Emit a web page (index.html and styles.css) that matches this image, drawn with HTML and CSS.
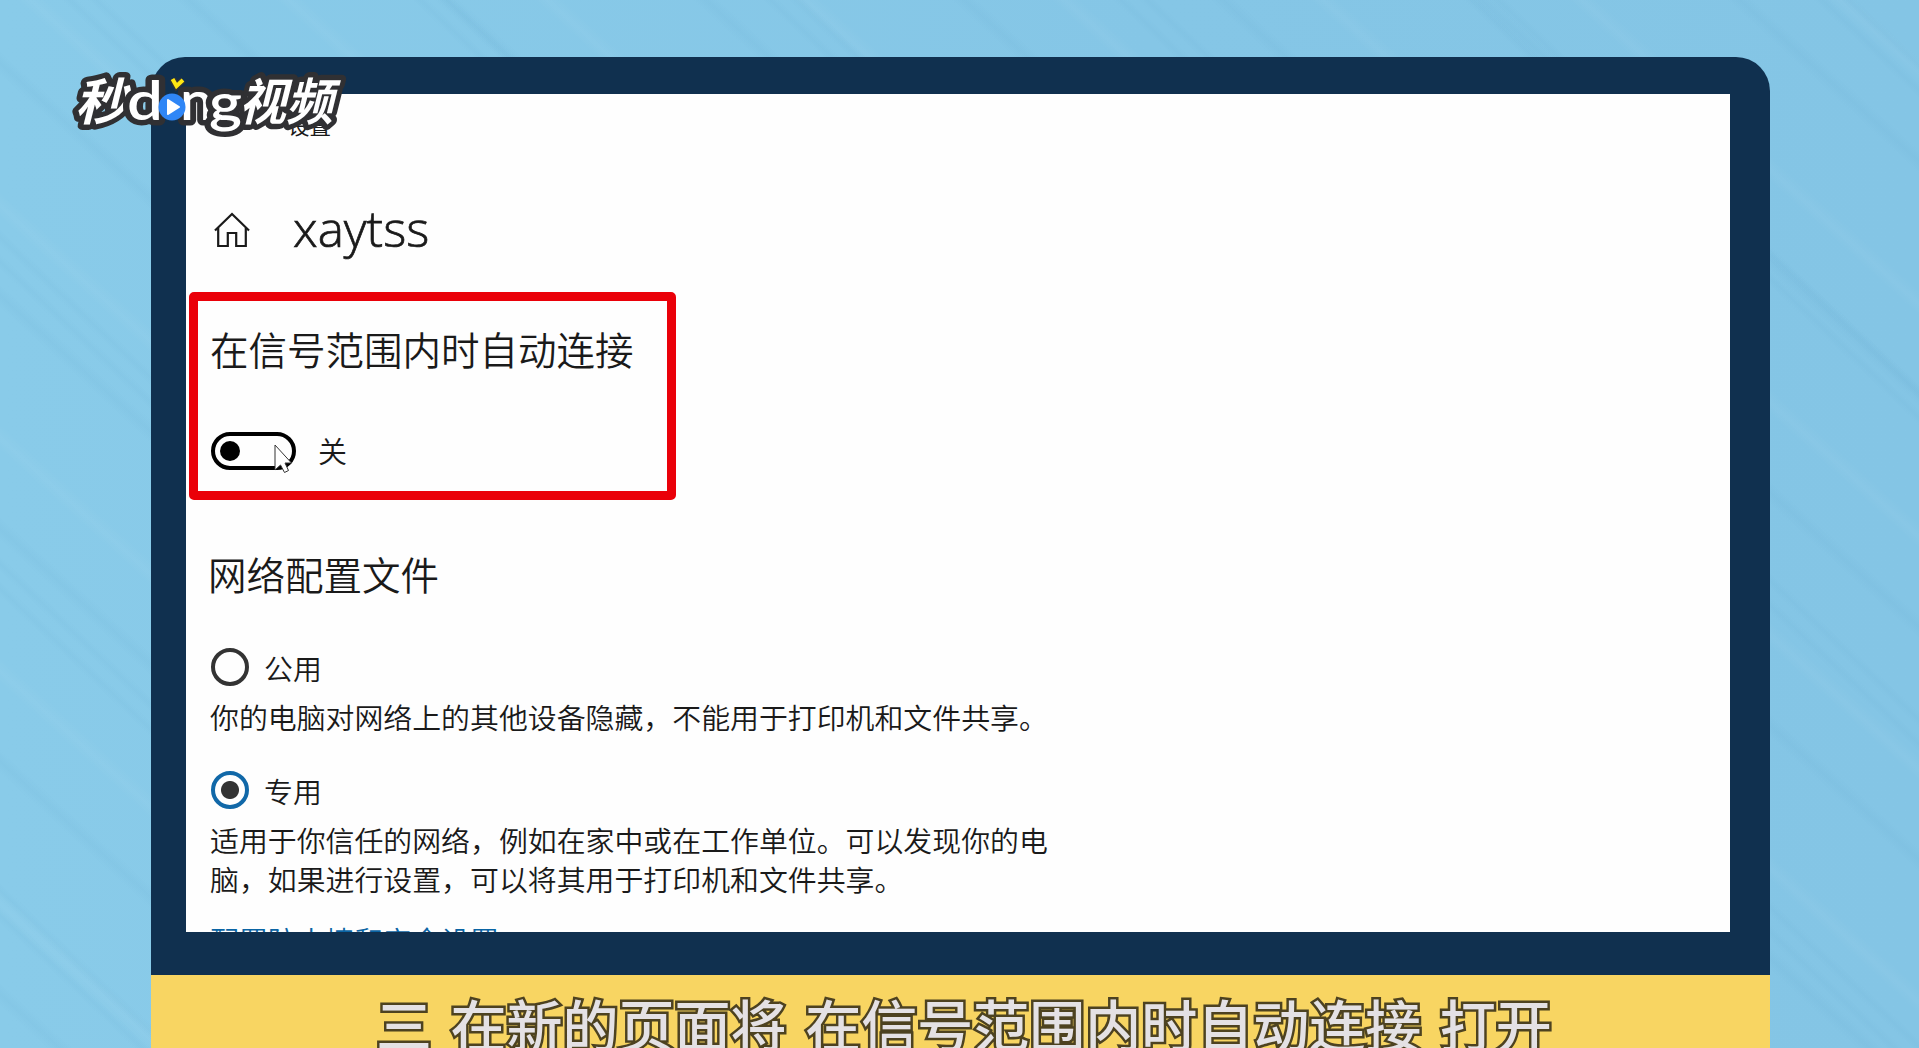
FILE: index.html
```html
<!DOCTYPE html>
<html lang="zh-CN">
<head>
  <meta charset="UTF-8">
  <meta name="viewport" content="width=device-width, initial-scale=1.0">
  <title>xaytss</title>
  <link rel="stylesheet" href="styles.css">
</head>
<body>
  <div class="monitor">
    <div class="screen">
      <div class="window-title">设置</div>

      <div class="page-header">
        <svg class="home" viewBox="0 0 36 36" fill="none" stroke="#1a1a1a" stroke-width="2.2">
          <path d="M1 18.500 L18 2 L35 18.500"/>
          <path d="M4.200 16 V34 H13.800 V21 H22.200 V34 H31.800 V16"/>
        </svg>
        <h1>xaytss</h1>
      </div>

      <div class="highlight">
        <h2>在信号范围内时自动连接</h2>
        <div class="toggle-row">
          <div class="toggle">
            <span class="knob"></span>
            <svg class="cursor" viewBox="0 0 18 30">
              <path d="M1 1 V26 L6.500 21 L10.500 28.500 L14.500 26.500 L11 19 H17.500 Z" fill="#fff" stroke="#333" stroke-width="1"/>
            </svg>
          </div>
          <span>关</span>
        </div>
      </div>

      <div class="profile">
        <h2>网络配置文件</h2>
        <div class="option">
          <span class="radio"></span>
          <span>公用</span>
        </div>
        <p>你的电脑对网络上的其他设备隐藏，不能用于打印机和文件共享。</p>
        <div class="option">
          <span class="radio checked"></span>
          <span>专用</span>
        </div>
        <p>适用于你信任的网络，例如在家中或在工作单位。可以发现你的电<br>脑，如果进行设置，可以将其用于打印机和文件共享。</p>
        <a class="link">配置防火墙和安全设置</a>
      </div>
    </div>
  </div>

  <div class="caption">三 在新的页面将 在信号范围内时自动连接 打开</div>

  <svg class="logo" viewBox="0 0 290 90">
    <g class="logo-text">
      <text class="cn" transform="translate(5 60) skewX(-14)" textLength="53" lengthAdjust="spacingAndGlyphs">秒</text>
      <text class="en" x="57" y="60" textLength="36" lengthAdjust="spacingAndGlyphs">d</text>
      <text class="en" x="110" y="60" textLength="33" lengthAdjust="spacingAndGlyphs">n</text>
      <text class="en" x="139" y="62" textLength="33" lengthAdjust="spacingAndGlyphs">g</text>
      <text class="cn" transform="translate(169 60) skewX(-14)" textLength="94" lengthAdjust="spacingAndGlyphs">视频</text>
    </g>
    <circle cx="102" cy="47" r="13.500" fill="#2f86f6"/>
    <path d="M98 40 L109 47 L98 54 Z" fill="#fff" stroke="#fff" stroke-width="2" stroke-linejoin="round"/>
    <path d="M102.500 19 L106.500 26 L113 20" fill="none" stroke="#333" stroke-width="7"/>
    <path d="M102.500 19 L106.500 26 L113 20" fill="none" stroke="#ffe712" stroke-width="4"/>
  </svg>
</body>
</html>
```
FILE: styles.css
```css
body {
  margin: 0;
  padding: 57px 149px 0 151px;
  height: 1048px;
  box-sizing: border-box;
  overflow: hidden;
  position: relative;
  font-family: "Noto Sans CJK SC", sans-serif;
  color: #1a1a1a;
  /* diagonal brush streaks over the light blue */
  background:
    repeating-linear-gradient(42deg, transparent 0 31px, rgba(80,150,190,.07) 40px, transparent 49px 98px, rgba(255,255,255,.04) 107px, transparent 118px 173px),
    repeating-linear-gradient(43deg, transparent 0 91px, rgba(80,150,190,.06) 97px, transparent 103px 109px, rgba(80,150,190,.06) 115px, transparent 121px 239px),
    linear-gradient(90deg, #89cbe9, #85c6e6 60%, #84c5e5);
}
h1, h2, p {
  margin: 0;
  font-weight: 300;
}
.monitor {
  height: 918px;
  box-sizing: border-box;
  padding: 37px 40px 43px 35px;
  background: #10304f;
  border-radius: 34px 34px 0 0;
}
.screen {
  height: 838px;
  overflow: hidden;
  background: #fefefe;
}
.window-title {
  height: 74px;
  padding: 16px 0 0 102px;
  box-sizing: border-box;
  font-size: 21.500px;
  line-height: 30px;
}
.page-header {
  display: flex;
  align-items: center;
  gap: 43px;
  height: 124px;
  padding: 0 0 0 28px;
  box-sizing: border-box;
}
.home {
  width: 36px;
  height: 36px;
}
h1 {
  font-family: "Open Sans", "Noto Sans", sans-serif;
  font-size: 49.500px;
  line-height: 60px;
  padding-bottom: 4px;
  -webkit-text-stroke: .7px #1a1a1a;
}
.highlight {
  width: 487px;
  height: 208px;
  margin-left: 3px;
  padding: 19px 0 0 12px;
  box-sizing: border-box;
  border: 9px solid #ea0009;
  border-radius: 5px;
}
h2 {
  font-size: 38.500px;
  line-height: 56px;
  font-weight: 350;
}
.toggle-row {
  display: flex;
  align-items: center;
  gap: 22px;
  margin: 54px 0 0 1px;
  height: 42px;
  font-size: 29px;
  font-weight: 350;
}
.toggle-row > span {
  margin-top: -2px;
}
.toggle {
  position: relative;
  width: 85px;
  height: 38px;
  box-sizing: border-box;
  border: 4px solid #000;
  border-radius: 19px;
  padding: 5px;
}
.knob {
  display: block;
  width: 20px;
  height: 20px;
  border-radius: 50%;
  background: #000;
}
.cursor {
  position: absolute;
  left: 59px;
  top: 8px;
  width: 18px;
  height: 30px;
}
.profile {
  padding: 45px 0 0 24px;
  font-size: 28.900px;
  font-weight: 350;
}
.profile h2 {
  margin-left: -2px;
}
.option {
  display: flex;
  align-items: center;
  gap: 15px;
  height: 40px;
  margin-top: 46px;
  padding-left: 1px;
}
.profile p {
  line-height: 39px;
  margin-top: 10px;
  font-weight: 350;
}
.profile p + .option {
  margin-top: 34px;
}
.radio {
  width: 38px;
  height: 38px;
  box-sizing: border-box;
  border: 4px solid #333;
  border-radius: 50%;
}
.checked {
  border-color: #1168a8;
  background: radial-gradient(circle, #333 8.500px, transparent 9.500px);
}
.link {
  display: block;
  margin-top: 22px;
  line-height: 39px;
  color: #0a64a4;
}
.caption {
  height: 73px;
  padding: 6px 0 0 225px;
  box-sizing: border-box;
  background: #f8d562;
  color: #e4e1e4;
  font-size: 56px;
  line-height: 84px;
  font-weight: 500;
  word-spacing: 6px;
  white-space: nowrap;
  -webkit-text-stroke: 5px #4d4220;
  paint-order: stroke fill;
}
.logo {
  position: absolute;
  left: 70px;
  top: 60px;
  width: 290px;
  height: 90px;
}
.logo-text {
  fill: #fff;
  stroke: #303033;
  stroke-width: 11px;
  stroke-linejoin: round;
  paint-order: stroke;
}
.cn {
  font-size: 50px;
  font-weight: 700;
}
.en {
  font-family: Lato, sans-serif;
  font-size: 54px;
  font-weight: 600;
}
```
